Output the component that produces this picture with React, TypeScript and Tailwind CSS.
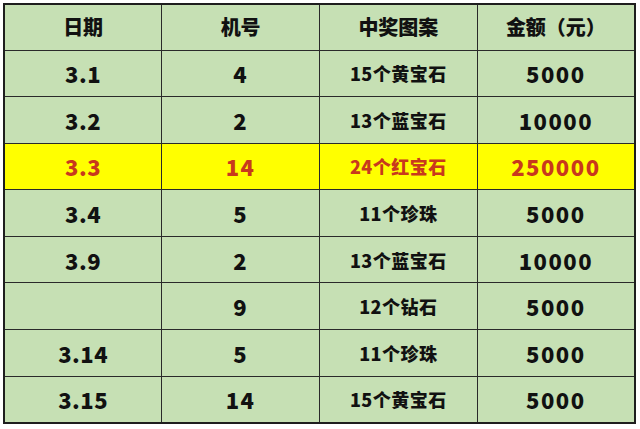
import React from "react";

const rows: [string, string, string, string, boolean][] = [
  ["3.1", "4", "15个黄宝石", "5000", false],
  ["3.2", "2", "13个蓝宝石", "10000", false],
  ["3.3", "14", "24个红宝石", "250000", true],
  ["3.4", "5", "11个珍珠", "5000", false],
  ["3.9", "2", "13个蓝宝石", "10000", false],
  ["", "9", "12个钻石", "5000", false],
  ["3.14", "5", "11个珍珠", "5000", false],
  ["3.15", "14", "15个黄宝石", "5000", false],
];

export default function App() {
  return (
    <div
      className="w-[640px] h-[429px] bg-white pl-[3px] pt-[3px]"
      style={{ fontFamily: '"Noto Sans CJK SC", "Liberation Sans", sans-serif' }}
    >
      <table className="w-[633px] table-fixed border-collapse border-2 border-[#1e1e1e]">
        <thead>
          <tr className="h-[46px] bg-[#c6e0b4] text-[#111111]">
            {["日期", "机号", "中奖图案", "金额（元）"].map((h) => (
              <th
                key={h}
                className="border-[1.5px] border-[#2a2a2a] text-[20px] font-black text-center p-0 leading-none"
              >
                {h}
              </th>
            ))}
          </tr>
        </thead>
        <tbody>
          {rows.map((r, i) => (
            <tr
              key={i}
              className={
                r[4]
                  ? "h-[46.6px] bg-[#ffff00] text-[#c8391d]"
                  : "h-[46.6px] bg-[#c6e0b4] text-[#111111]"
              }
            >
              {r.slice(0, 4).map((c, j) => (
                <td
                  key={j}
                  className={
                    j === 2
                      ? "border-[1.5px] border-[#2a2a2a] text-center p-0 text-[18px] font-black leading-none tracking-[0.5px]"
                      : j === 0
                      ? "border-[1.5px] border-[#2a2a2a] text-center p-0 text-[22px] font-black leading-none tracking-[0.5px]"
                      : "border-[1.5px] border-[#2a2a2a] text-center p-0 text-[22px] font-black leading-none tracking-[1.5px]"
                  }
                >
                  {c as string}
                </td>
              ))}
            </tr>
          ))}
        </tbody>
      </table>
    </div>
  );
}
